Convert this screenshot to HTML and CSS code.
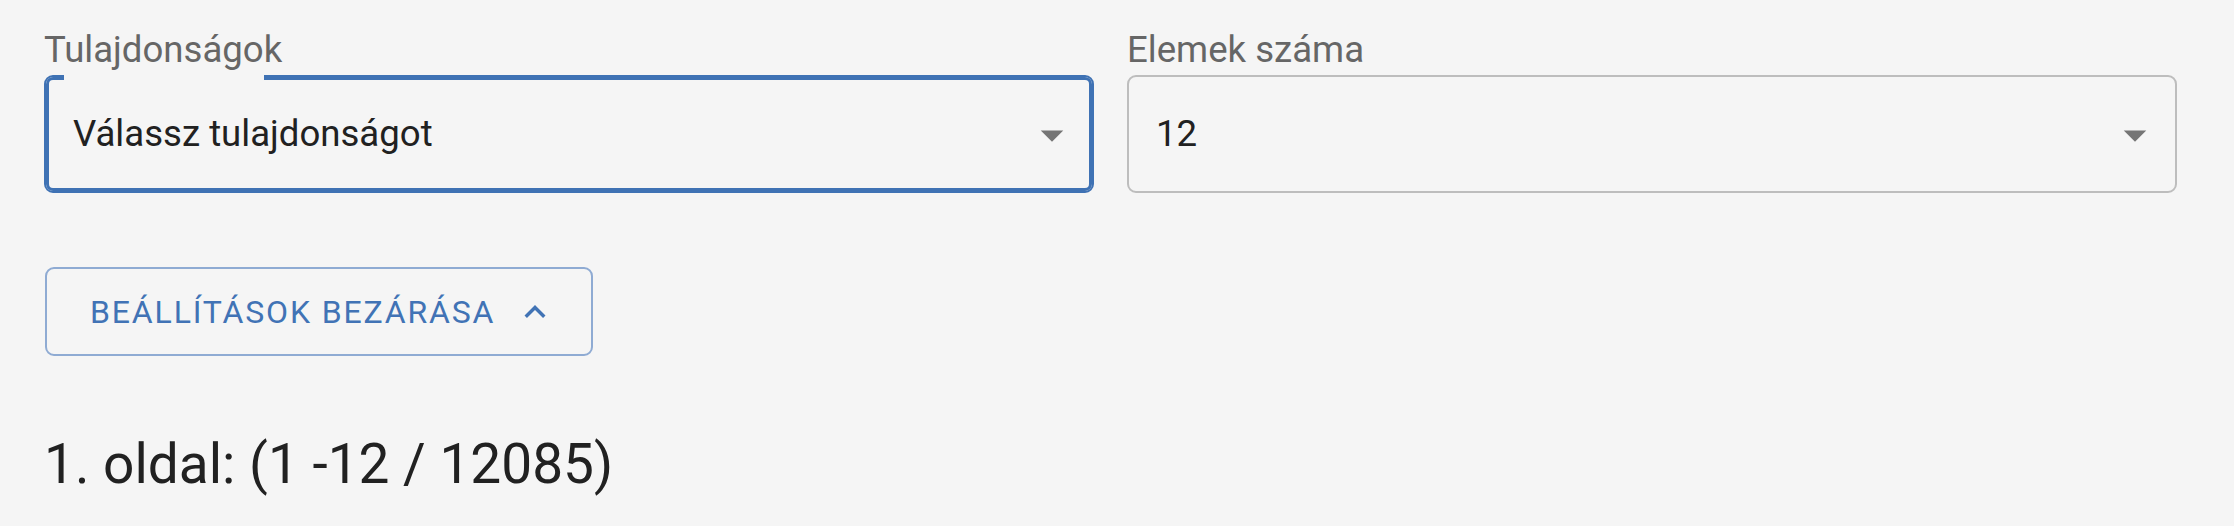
FILE: index.html
```html
<!DOCTYPE html>
<html lang="hu">
<head>
<meta charset="utf-8">
<title>Beállítások</title>
<link rel="stylesheet" href="styles.css">
</head>
<body>
<div class="page">
  <div class="fields">
    <div class="field">
      <div class="field-label">Tulajdonságok</div>
      <div class="select select--focused">
        <span class="select-value">Válassz tulajdonságot</span>
        <svg class="select-icon" viewBox="0 0 24 24" aria-hidden="true"><path d="M7 10l5 5 5-5z"/></svg>
      </div>
    </div>
    <div class="field">
      <div class="field-label">Elemek száma</div>
      <div class="select">
        <span class="select-value">12</span>
        <svg class="select-icon" viewBox="0 0 24 24" aria-hidden="true"><path d="M7 10l5 5 5-5z"/></svg>
      </div>
    </div>
  </div>
  <button class="toggle-btn" type="button">
    <span>BEÁLLÍTÁSOK BEZÁRÁSA</span>
    <svg class="toggle-icon" viewBox="0 0 24 24" aria-hidden="true"><path d="M12 8l-6 6 1.41 1.41L12 10.83l4.59 4.58L18 14z"/></svg>
  </button>
  <h2 class="page-title">1. oldal: (1 -12 / 12085)</h2>
</div>
</body>
</html>
```

FILE: styles.css
```css
* { box-sizing: border-box; }

html, body {
  margin: 0;
  padding: 0;
  background: #f5f5f5;
}

body {
  font-family: Roboto, "Liberation Sans", Arial, sans-serif;
  color: #212121;
}

.page {
  padding: 29px 57px 0 44px;
}

.fields {
  display: grid;
  grid-template-columns: 1fr 1fr;
  column-gap: 33px;
}

.field-label {
  font-size: 36.6px;
  line-height: 42px;
  color: #666666;
  margin-bottom: 4px;
}

.select {
  position: relative;
  height: 118px;
  border: 2px solid #bdbdbd;
  border-radius: 9px;
  display: flex;
  align-items: center;
  padding: 0 13px 0 27px;
}

.select--focused {
  border-color: #3f72b4;
  box-shadow: inset 0 0 0 3px #3f72b4;
}

.select--focused::before {
  content: "";
  position: absolute;
  top: -2px;
  left: 18px;
  width: 200px;
  height: 5px;
  background: #f5f5f5;
}

.select-value {
  flex: 1;
  font-size: 36.6px;
  line-height: 42px;
  color: #212121;
}

.select-icon {
  width: 54px;
  height: 54px;
  fill: #757575;
  flex: none;
  margin-top: 1px;
}

.toggle-btn {
  margin: 74px 0 0 1px;
  height: 89px;
  display: inline-flex;
  align-items: center;
  padding: 0 35px 0 43px;
  background: transparent;
  border: 2px solid #8fabd3;
  border-radius: 9px;
  color: #4173b5;
  font-family: Roboto, "Liberation Sans", Arial, sans-serif;
  font-size: 32px;
  font-weight: 400;
  letter-spacing: 1.85px;
  line-height: 38px;
}

.toggle-icon {
  width: 42px;
  height: 42px;
  fill: #4173b5;
  margin-left: 19px;
  flex: none;
}

.page-title {
  margin: 76px 0 0 0;
  font-size: 55px;
  font-weight: 400;
  line-height: 64px;
  color: #212121;
}
```
